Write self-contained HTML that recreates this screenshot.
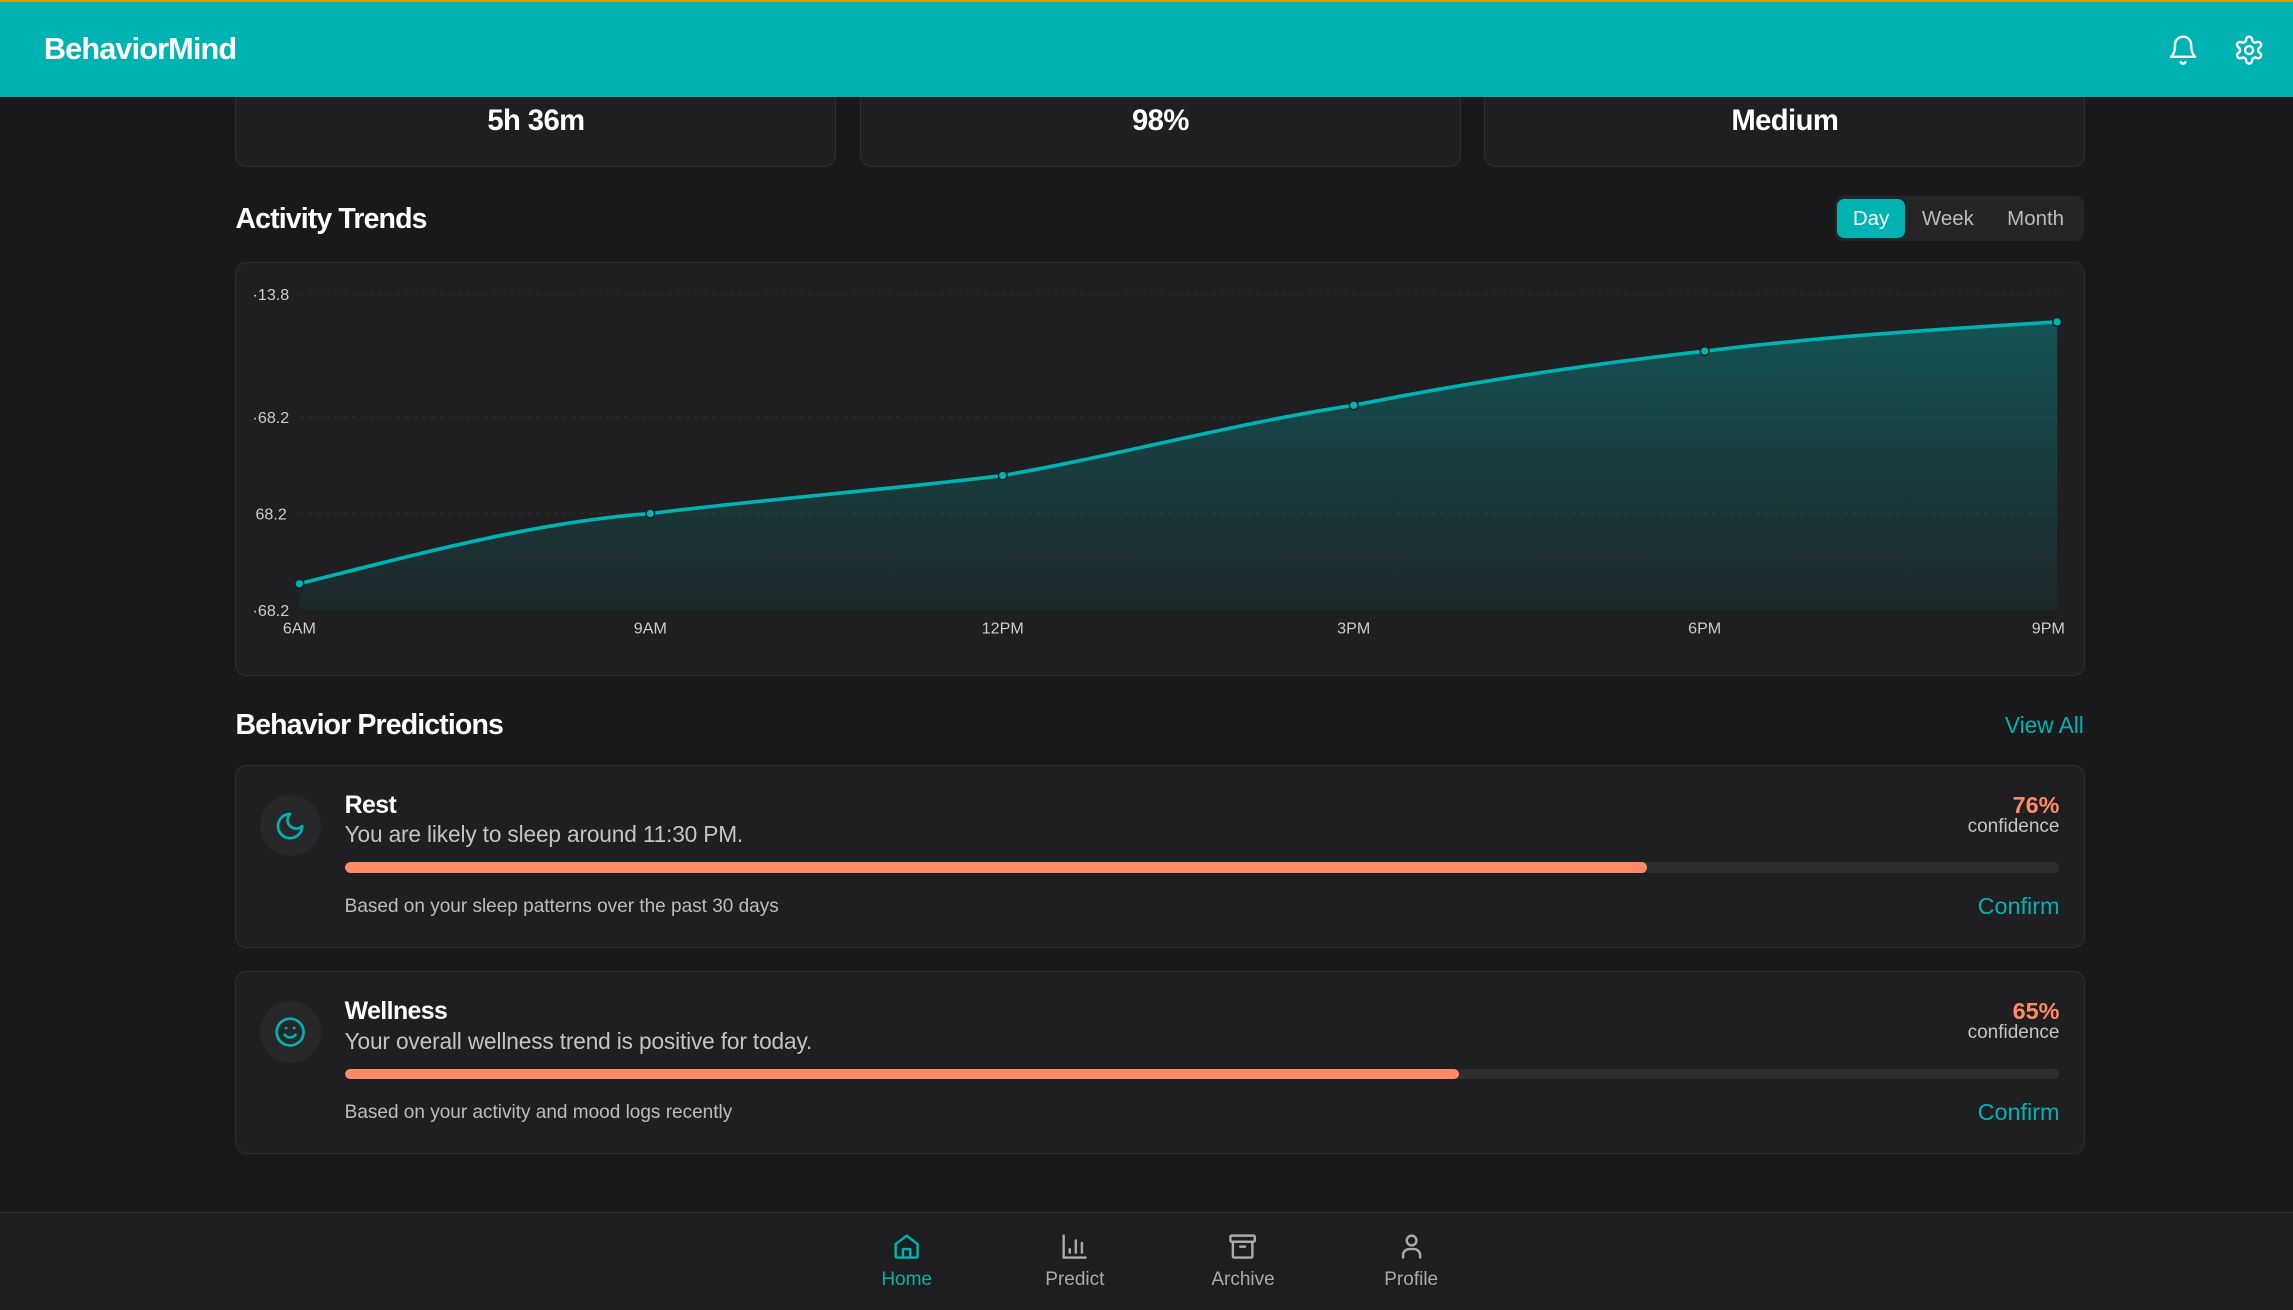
<!DOCTYPE html>
<html><head><meta charset="utf-8"><style>
html,body{margin:0;padding:0}
body{width:1568px;height:895px;zoom:1.46237;background:#19191b;font-family:"Liberation Sans",sans-serif;color:#fff;position:relative;overflow:hidden}
.a{position:absolute}
.card{position:absolute;background:#1f1f21;border:1px solid #2f2f32;border-radius:8px;box-sizing:border-box}
.hdr{left:0;top:0;width:1568px;height:66px;background:#00b3b3;border-top:2px solid #c9a400;box-sizing:border-box;z-index:5}
.val{position:absolute;width:100%;text-align:center;top:31px;font-size:20px;font-weight:bold;letter-spacing:-0.4px}
.h2{font-size:19.5px;font-weight:bold;letter-spacing:-0.6px}
.tog{left:1255px;top:134px;width:170px;height:31px;background:#252528;border-radius:6px}
.tog span{position:absolute;top:0;height:31px;line-height:31px;font-size:14px;color:#bbb;text-align:center}
.title{font-size:17px;font-weight:bold;letter-spacing:-0.4px}
.sub{font-size:15.5px;color:#c4c4c4;letter-spacing:-0.1px}
.foot{font-size:13px;color:#bdbdbd}
.conf{font-size:16px;color:#00b3b3}
.pct{font-size:16px;font-weight:bold;color:#ff8a65;text-align:right}
.cf{font-size:13px;color:#c4c4c4;text-align:right}
.bar{height:7px;background:#2e2e31;border-radius:4px;overflow:hidden}
.bar i{display:block;height:100%;background:#ff8a65;border-radius:4px}
.ic{width:42px;height:42px;border-radius:50%;background:#27272a}
.nav{left:0;top:829px;width:1568px;height:66px;background:#1e1e20;border-top:1px solid #2f2f32}
.ni{position:absolute;width:80px;text-align:center;font-size:13px;color:#aaa}
</style></head><body>
<div class="a hdr">
<div class="a" style="left:30px;top:20px;font-size:21px;font-weight:bold;letter-spacing:-0.6px">BehaviorMind</div>
<svg class="a" style="left:1482px;top:22px" width="22" height="22" viewBox="0 0 24 24" fill="none" stroke="#fff" stroke-width="1.8" stroke-linecap="round" stroke-linejoin="round"><path d="M6 8a6 6 0 0 1 12 0c0 7 3 9 3 9H3s3-2 3-9"/><path d="M10.3 21a1.9 1.9 0 0 0 3.4 0"/></svg>
<svg class="a" style="left:1527px;top:22px" width="22" height="22" viewBox="0 0 24 24" fill="none" stroke="#fff" stroke-width="1.8" stroke-linecap="round" stroke-linejoin="round"><path d="M12.2 2h-.4a2 2 0 0 0-2 2v.2a2 2 0 0 1-1 1.7l-.4.3a2 2 0 0 1-2 0l-.2-.1a2 2 0 0 0-2.7.7l-.2.4a2 2 0 0 0 .7 2.7l.2.1a2 2 0 0 1 1 1.7v.5a2 2 0 0 1-1 1.8l-.2.1a2 2 0 0 0-.7 2.7l.2.4a2 2 0 0 0 2.7.7l.2-.1a2 2 0 0 1 2 0l.4.3a2 2 0 0 1 1 1.7v.2a2 2 0 0 0 2 2h.4a2 2 0 0 0 2-2v-.2a2 2 0 0 1 1-1.7l.4-.3a2 2 0 0 1 2 0l.2.1a2 2 0 0 0 2.7-.7l.2-.4a2 2 0 0 0-.7-2.7l-.2-.1a2 2 0 0 1-1-1.8v-.5a2 2 0 0 1 1-1.7l.2-.1a2 2 0 0 0 .7-2.7l-.2-.4a2 2 0 0 0-2.7-.7l-.2.1a2 2 0 0 1-2 0l-.4-.3a2 2 0 0 1-1-1.7V4a2 2 0 0 0-2-2z"/><circle cx="12" cy="12" r="3"/></svg>
</div>
<div class="card" style="left:161px;top:40px;width:411px;height:74px"><div class="val">5h 36m</div></div>
<div class="card" style="left:588px;top:40px;width:411px;height:74px"><div class="val">98%</div></div>
<div class="card" style="left:1015px;top:40px;width:411px;height:74px"><div class="val">Medium</div></div>

<div class="a h2" style="left:161px;top:139px">Activity Trends</div>
<div class="a tog"><span style="left:1px;top:2px;width:47px;height:27px;line-height:27px;background:#00b3b3;color:#fff;border-radius:5px">Day</span><span style="left:52px;width:50px">Week</span><span style="left:106px;width:62px">Month</span></div>

<div class="card" style="left:161px;top:179px;width:1265px;height:283px"></div>
<svg class="a" style="left:161px;top:179px" width="1265" height="283">
<defs><linearGradient id="g" x1="0" y1="0" x2="0" y2="1"><stop offset="0" stop-color="#00b3b3" stop-opacity="0.35"/><stop offset="1" stop-color="#00b3b3" stop-opacity="0.05"/></linearGradient></defs>
<g stroke="#2a2a2d" stroke-dasharray="3 3"><line x1="44" y1="22" x2="1246" y2="22"/><line x1="44" y1="106" x2="1246" y2="106"/><line x1="44" y1="172" x2="1246" y2="172"/></g>
<path d="M44 220 C124 200 204 178 284 172 C364 162 444 156 525 146 C605 132 685 110 765 98 C845 82 925 70 1005 61 C1085 51 1165 46 1246 41 L1246 238 L44 238Z" fill="url(#g)"/>
<path d="M44 220 C124 200 204 178 284 172 C364 162 444 156 525 146 C605 132 685 110 765 98 C845 82 925 70 1005 61 C1085 51 1165 46 1246 41" fill="none" stroke="#00b3b3" stroke-width="2.5"/>
<g fill="#00b3b3" stroke="#1f1f21" stroke-width="1"><circle cx="44" cy="220" r="3"/><circle cx="284" cy="172" r="3"/><circle cx="525" cy="146" r="3"/><circle cx="765" cy="98" r="3"/><circle cx="1005" cy="61" r="3"/><circle cx="1246" cy="41" r="3"/></g>
<g font-size="11" fill="#ccc" font-family="Liberation Sans"><text x="12" y="26">·13.8</text><text x="12" y="110">·68.2</text><text x="14" y="176">68.2</text><text x="12" y="242">·68.2</text>
<text x="44" y="254" text-anchor="middle">6AM</text><text x="284" y="254" text-anchor="middle">9AM</text><text x="525" y="254" text-anchor="middle">12PM</text><text x="765" y="254" text-anchor="middle">3PM</text><text x="1005" y="254" text-anchor="middle">6PM</text><text x="1240" y="254" text-anchor="middle">9PM</text></g>
</svg>

<div class="a h2" style="left:161px;top:485px">Behavior Predictions</div>
<div class="a" style="left:1371px;top:487px;font-size:15.5px;color:#00b3b3">View All</div>

<div class="card" style="left:161px;top:523px;width:1265px;height:125px">
<div class="a ic" style="left:16px;top:20px"><svg style="margin:10px" width="22" height="22" viewBox="0 0 24 24" fill="none" stroke="#00b3b3" stroke-width="2" stroke-linecap="round" stroke-linejoin="round"><path d="M12 3a6 6 0 0 0 9 9 9 9 0 1 1-9-9z"/></svg></div>
<div class="a title" style="left:74px;top:17px">Rest</div>
<div class="a sub" style="left:74px;top:38px">You are likely to sleep around 11:30 PM.</div>
<div class="a pct" style="right:17px;top:18px">76%</div>
<div class="a cf" style="right:17px;top:34px">confidence</div>
<div class="a bar" style="left:74px;top:66px;width:1172px"><i style="width:76%"></i></div>
<div class="a foot" style="left:74px;top:89px">Based on your sleep patterns over the past 30 days</div>
<div class="a conf" style="right:17px;top:87px">Confirm</div>
</div>

<div class="card" style="left:161px;top:664px;width:1265px;height:125px">
<div class="a ic" style="left:16px;top:20px"><svg style="margin:10px" width="22" height="22" viewBox="0 0 24 24" fill="none" stroke="#00b3b3" stroke-width="2" stroke-linecap="round" stroke-linejoin="round"><circle cx="12" cy="12" r="10"/><path d="M8 14s1.5 2 4 2 4-2 4-2"/><line x1="9" y1="9" x2="9.01" y2="9"/><line x1="15" y1="9" x2="15.01" y2="9"/></svg></div>
<div class="a title" style="left:74px;top:17px">Wellness</div>
<div class="a sub" style="left:74px;top:38px">Your overall wellness trend is positive for today.</div>
<div class="a pct" style="right:17px;top:18px">65%</div>
<div class="a cf" style="right:17px;top:34px">confidence</div>
<div class="a bar" style="left:74px;top:66px;width:1172px"><i style="width:65%"></i></div>
<div class="a foot" style="left:74px;top:89px">Based on your activity and mood logs recently</div>
<div class="a conf" style="right:17px;top:87px">Confirm</div>
</div>

<div class="a nav">
<div class="ni" style="left:580px;top:13px;color:#00b3b3"><svg width="20" height="20" viewBox="0 0 24 24" fill="none" stroke="#00b3b3" stroke-width="2" stroke-linejoin="round"><path d="M3 10l9-7 9 7v10a1 1 0 0 1-1 1H4a1 1 0 0 1-1-1z"/><path d="M9 21v-7h6v7"/></svg><div style="margin-top:1px">Home</div></div>
<div class="ni" style="left:695px;top:13px"><svg width="20" height="20" viewBox="0 0 24 24" fill="none" stroke="#aaa" stroke-width="2" stroke-linecap="round"><path d="M3 3v18h18"/><path d="M8 17v-3M13 17V7M18 17v-8"/></svg><div style="margin-top:1px">Predict</div></div>
<div class="ni" style="left:810px;top:13px"><svg width="20" height="20" viewBox="0 0 24 24" fill="none" stroke="#aaa" stroke-width="2" stroke-linecap="round"><rect x="2" y="3" width="20" height="5" rx="1"/><path d="M4 8v12a1 1 0 0 0 1 1h14a1 1 0 0 0 1-1V8M10 12h4"/></svg><div style="margin-top:1px">Archive</div></div>
<div class="ni" style="left:925px;top:13px"><svg width="20" height="20" viewBox="0 0 24 24" fill="none" stroke="#aaa" stroke-width="2" stroke-linecap="round"><circle cx="12" cy="7" r="4"/><path d="M5 21v-2a5 5 0 0 1 5-5h4a5 5 0 0 1 5 5v2"/></svg><div style="margin-top:1px">Profile</div></div>
</div>
</body></html>
